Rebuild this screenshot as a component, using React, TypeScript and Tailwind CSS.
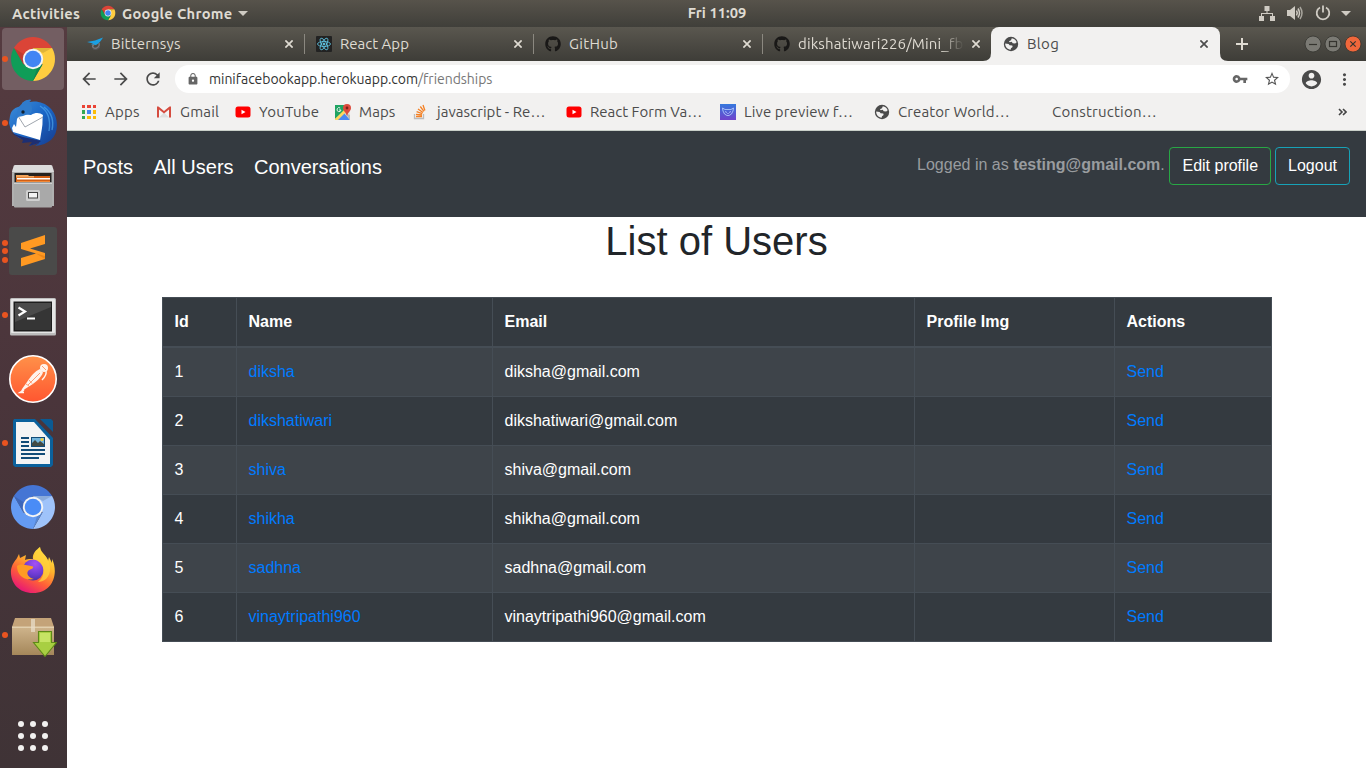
import React from "react";
import { FaGithub } from "react-icons/fa";
import {
  MdArrowBack,
  MdArrowForward,
  MdLock,
  MdMoreVert,
  MdRefresh,
  MdStarBorder,
  MdVpnKey,
} from "react-icons/md";

type IconProps = { className?: string };

function ChromeMark({
  className,
  top = "#db4437",
  right = "#ffcd40",
  left = "#0f9d58",
  core = "#4285f4",
}: IconProps & { top?: string; right?: string; left?: string; core?: string }) {
  return (
    <svg viewBox="0 0 48 48" className={className}>
      <path fill={top} d="M4.95 13A22 22 0 0 1 43.05 13H24L14.47 29.5Z" />
      <path fill={right} d="M43.05 13A22 22 0 0 1 24 46L33.53 29.5L24 13Z" />
      <path fill={left} d="M24 46A22 22 0 0 1 4.95 13L14.47 29.5H33.53Z" />
      <path fill="#000" opacity=".12" d="M24 13H43L34 18ZM5 13L14.5 29.5L16 20ZM24 46L33.5 29.5L28 33Z" />
      <circle cx="24" cy="24" r="10.2" fill="#f4f4f4" />
      <circle cx="24" cy="24" r="8.3" fill={core} />
    </svg>
  );
}

function Globe({ className }: IconProps) {
  return (
    <svg viewBox="0 0 16 16" className={className}>
      <circle cx="8" cy="8" r="7.200" fill="#4a4a4a" />
      <path
        fill="#f2f1f0"
        d="M8.800 2.200C11 2.400 13 4 13.700 6.200L12.200 7.400L9.700 7.200L8.700 5.800L6.800 6.200L5.900 5.200L8 4.300ZM2.200 7.600L5.600 8L6.600 9.200L9.300 9.600L9.600 11L8 12.200L7.600 13.700C4.400 13.500 2 10.800 2.200 7.600Z"
      />
    </svg>
  );
}

function Thunderbird() {
  return (
    <svg viewBox="0 0 48 48" className="size-12">
      <defs>
        <linearGradient id="tb" x1="0" y1="0" x2="1" y2="1">
          <stop offset="0" stopColor="#3f8fd8" />
          <stop offset=".5" stopColor="#1a66c6" />
          <stop offset="1" stopColor="#163a8c" />
        </linearGradient>
      </defs>
      <path fill="url(#tb)" d="M13 4C16 1 20 0 22 1L20 3C34 0 48 10 48 26C48 38 40 46 26 47L30 44L20 47L24 43C12 42 2 36 0 24L1 17C2 11 6 8 13 7Z" />
      <path fill="#1d2f73" d="M2 34L14 38L32 42L26 47L30 44L20 47L23 43L13 44L14 41Z" />
      <path fill="#fff" d="M11 15L22 16C27 13 31 14 34 16C33 20 34 24 33 29L31 41L4 33L3 29L5 25L7 28L8 20Z" />
      <path fill="none" stroke="#888f99" strokeWidth=".8" d="M9 17L16 28L34 18" />
      <path fill="#2f7bcc" d="M9 10C12 4 18 0 22 1L19 4C23 5 24 9 22 14L14 17L9 18C8 15 8 12 9 10Z" />
      <circle cx="14" cy="13" r="1.700" fill="#123" />
      <path fill="none" stroke="#4ba3e8" strokeWidth="1.400" opacity=".7" d="M31 7C39 12 42 20 40 32M35 8C43 14 45 22 43 31" />
    </svg>
  );
}

function Files() {
  return (
    <svg viewBox="0 -1 48 48" className="size-12">
      <path fill="#b0b0b0" d="M4 4H44L45 9V42H3V9Z" />
      <path fill="#dcdcdc" d="M4.500 2.500Q4.500 1 6 1H42Q43.500 1 43.500 2.500L45 8H3Z" />
      <rect x="5.500" y="9" width="37" height="10" fill="#262220" />
      <path fill="#d35f14" d="M7 12H41V18H7Z" />
      <path fill="#f3a55c" d="M7 11H19L20 12H25V13.500H7Z" />
      <path fill="#fff" d="M8 14H41V15.500H8Z" />
      <path fill="#f08a3a" d="M8 17H41V18H8Z" />
      <rect x="5" y="18.500" width="38" height="25" rx="1" fill="#a9a9a9" />
      <path fill="#cfcfcf" d="M5 18.500H43V20H5Z" />
      <rect x="17" y="26" width="14" height="11" rx="1.500" fill="#d0d0d0" />
      <rect x="19.500" y="28.500" width="9" height="5.500" fill="#f4f4f4" stroke="#444" strokeWidth="1" />
    </svg>
  );
}

function Sublime() {
  return (
    <svg viewBox="0 0 48 48" className="size-12">
      <rect width="48" height="48" rx="3" fill="#4a4a49" />
      <path fill="#ff9922" d="M12 16L36 8V17L21 21.500L36 26V32L12 39.500V31L27 26.500L12 22Z" />
      <path fill="#e27d12" d="M12 22L36 29V32L27 26.500Z" opacity=".65" />
    </svg>
  );
}

function Terminal() {
  return (
    <svg viewBox="0 0 48 48" className="size-12">
      <rect x="1" y="7" width="46" height="37.500" rx="1.500" fill="#bdbdbd" />
      <rect x="2" y="8" width="44" height="34" rx="1" fill="#e6e6e6" />
      <rect x="4.500" y="10.500" width="38.500" height="30" fill="#1d1d1d" />
      <rect x="6" y="12" width="36" height="27" fill="#353535" />
      <path fill="#5a5a5a" opacity=".6" d="M6 12H42V16L6 31Z" />
      <path fill="none" stroke="#fff" strokeWidth="2.200" d="M9.500 16.500L16 20.500L9.500 24.500" />
      <path fill="#fff" d="M18 26.500H26V28.500H18Z" />
    </svg>
  );
}

function Postman() {
  return (
    <svg viewBox="0 0 48 48" className="size-12">
      <defs>
        <linearGradient id="pm" x1="0" y1="0" x2="0" y2="1">
          <stop offset="0" stopColor="#ff9149" />
          <stop offset="1" stopColor="#ff5630" />
        </linearGradient>
      </defs>
      <circle cx="24" cy="24" r="23.200" fill="url(#pm)" stroke="#fff" strokeWidth="1.600" />
      <circle cx="35" cy="13" r="4" fill="#fff3ec" />
      <path fill="#fff3ec" d="M31 14L34 17.500C32 23 27 27 21.500 30.500L16 34L11.500 38L13 34L18 27C22 21 26 16 31 14Z" />
      <path fill="none" stroke="#fff3ec" strokeWidth="1.500" d="M37 16C38 20 35 23 33 25M15 35L11 37.500H15" />
      <path fill="none" stroke="#ff783d" strokeWidth=".7" d="M20 25L23 28.500M33 11L37 15M17 29L20 31M19 30L31 18" />
    </svg>
  );
}

function Writer() {
  return (
    <svg viewBox="0 0 48 48" className="size-12">
      <path fill="#0b619c" d="M5 0H26L44 19V46L42 48H6L4 46V2Z" />
      <path fill="#f4f4f4" d="M7 3H25L41 21V45H7Z" />
      <path fill="#0b5a92" d="M31 0H42L44 2V13Z" />
      <path fill="#124c77" d="M12 18H20V20H12ZM12 22H20V24H12ZM12 26H20V28H12ZM12 30H36V32H12ZM12 34H36V36H12ZM12 38H30V40H12Z" />
      <rect x="22.500" y="18.500" width="13" height="9" fill="#74b5db" stroke="#124c77" />
      <path fill="#434b45" d="M23 27V24L26 21L29 24L31 22L35 25V27Z" />
      <circle cx="33" cy="20.500" r="1.500" fill="#f5cf3a" />
    </svg>
  );
}

function Firefox() {
  return (
    <svg viewBox="0 0 48 48" className="size-12">
      <defs>
        <linearGradient id="ff" x1=".8" y1="0" x2=".25" y2="1">
          <stop offset="0" stopColor="#fff04a" />
          <stop offset=".35" stopColor="#ffb42c" />
          <stop offset=".65" stopColor="#ff6037" />
          <stop offset="1" stopColor="#e5107c" />
        </linearGradient>
        <radialGradient id="fp" cx=".6" cy=".2" r=".9">
          <stop offset="0" stopColor="#a451f5" />
          <stop offset=".6" stopColor="#6a3ad0" />
          <stop offset="1" stopColor="#43308f" />
        </radialGradient>
      </defs>
      <path fill="url(#ff)" d="M10 7L11 11C13 10 15 9 17 8L16 13C19 11.500 22 12 24 12C23 7 27 3 31 0C31 6 38 8 39 14L40 10L43 16V12C50 26 44 46 24 46C9 46 1 35 2 23C3 17 6 14 8 11Z" />
      <circle cx="24" cy="23" r="10.500" fill="url(#fp)" />
      <path fill="#ff9b24" d="M8 19C12 16 17 18 24 19.500C25 22 21 22 19 24C17 27 20 31 25 32C15 34 8 28 8 19Z" />
      <path fill="#ffd33c" d="M24 12C27 4 30 2 31 0C32 7 40 9 41 20C42 31 34 35 29 35C38 28 36 15 24 12Z" opacity=".75" />
    </svg>
  );
}

function Package() {
  return (
    <svg viewBox="0 0 48 48" className="size-12">
      <defs>
        <linearGradient id="bx" x1="0" y1="0" x2="0" y2="1">
          <stop offset="0" stopColor="#cfb48c" />
          <stop offset="1" stopColor="#a5875a" />
        </linearGradient>
      </defs>
      <path fill="#c4a379" d="M6 7H42L45 16H3Z" />
      <rect x="3" y="16" width="42" height="28" fill="url(#bx)" />
      <path fill="#e1cfae" d="M3 15.500H45V17H3Z" />
      <path fill="#e8dcc8" opacity=".75" d="M22 8H26V21H22Z" />
      <path fill="#a8cf42" stroke="#5d8a17" strokeWidth="1.100" d="M29.500 20.500H42.500V31.500H47.500L36 45.500L24.500 31.500H29.500Z" />
      <path fill="#d6ef77" opacity=".65" d="M31 22H41V31H31Z" />
    </svg>
  );
}

type DockItem = { name: string; icon: React.ReactNode; dots: number; active?: boolean };

const dock: DockItem[] = [
  { name: "chrome", icon: <ChromeMark className="size-12" />, dots: 1, active: true },
  { name: "thunderbird", icon: <Thunderbird />, dots: 1 },
  { name: "files", icon: <Files />, dots: 0 },
  { name: "sublime", icon: <Sublime />, dots: 3 },
  { name: "terminal", icon: <Terminal />, dots: 1 },
  { name: "postman", icon: <Postman />, dots: 0 },
  { name: "writer", icon: <Writer />, dots: 1 },
  {
    name: "chromium",
    icon: <ChromeMark className="size-12" top="#4575d4" right="#9fc3fa" left="#649bf3" core="#4a8cf6" />,
    dots: 0,
  },
  { name: "firefox", icon: <Firefox />, dots: 0 },
  { name: "package", icon: <Package />, dots: 1 },
];

function Dock() {
  return (
    <aside className="flex w-[67px] shrink-0 flex-col bg-linear-to-b from-[#553b40] via-[#4a353b] to-[#3f3336]">
      {dock.map((d) => (
        <div key={d.name} className="flex h-16 items-center">
          <div
            className={
              d.active
                ? "ml-0.5 flex h-[62px] w-[62px] items-center rounded bg-[#735e62]"
                : "ml-0.5 flex h-[62px] w-[62px] items-center"
            }
          >
            <span className="flex w-[7px] flex-col items-start gap-[2.5px]">
              {Array.from({ length: d.dots }, (_, i) => (
                <i key={i} className="size-1.5 rounded-full bg-[#e95420]" />
              ))}
            </span>
            {d.icon}
          </div>
        </div>
      ))}
      <div className="mt-auto flex h-[64px] items-center justify-center pr-px">
        <div className="grid grid-cols-3 gap-1.5">
          {Array.from({ length: 9 }, (_, i) => (
            <i key={i} className="size-1.5 rounded-full bg-[#f2f1f0]" />
          ))}
        </div>
      </div>
    </aside>
  );
}

function TopBar() {
  return (
    <header className="grid h-[27px] shrink-0 grid-cols-[1fr_auto_1fr] items-center bg-linear-to-b from-[#57534b] to-[#403f3a] text-[14.67px] leading-none font-bold text-[#dfdbd2]">
      <div className="flex items-center pl-3">
        <span className="w-[88px] pt-0.5 tracking-[0.3px]">Activities</span>
        <ChromeMark className="mb-px size-4" />
        <span className="ml-1.5 pt-0.5 tracking-[0.3px]">Google Chrome</span>
        <svg viewBox="0 0 10 5" className="ml-1.5 h-[5px] w-[10px]" fill="#cfcbc3">
          <path d="M0 0H10L5 5Z" />
        </svg>
      </div>
      <span className="pl-[68px] tracking-[0.05px]">Fri 11:09</span>
      <div className="flex items-center justify-end pr-[15px]">
        <svg viewBox="0 0 16 16" className="mr-3 mb-px size-4" fill="#cfcbc3">
          <path d="M5.500 1H10.500V6H8.500V8H14V11H16V16H11V11H13V9H3V11H5V16H0V11H2V8H7.500V6H5.500Z" />
        </svg>
        <svg viewBox="0 0 16 16" className="mr-3 mb-px size-4" fill="none" stroke="#cfcbc3" strokeWidth="1.500">
          <path fill="#cfcbc3" stroke="none" d="M0 5H3L8 1V15L3 11H0Z" />
          <path d="M9.500 5.500Q11 8 9.500 10.500M11 3.500Q14 8 11 12.500" />
          <path stroke="#a8a59d" d="M13 2Q17 8 13 14" />
        </svg>
        <svg viewBox="0 0 16 16" className="mr-2.5 mb-px size-4" fill="none" stroke="#cfcbc3" strokeWidth="1.800">
          <path d="M5 2.500A6.300 6.300 0 1 0 11 2.500M8 .5V7.500" />
        </svg>
        <svg viewBox="0 0 10 5" className="h-[5px] w-[10px]" fill="#cfcbc3">
          <path d="M0 0H10L5 5Z" />
        </svg>
      </div>
    </header>
  );
}

function CloseX({ className }: IconProps) {
  return (
    <svg viewBox="0 0 8 8" className={className} fill="none" stroke="currentColor" strokeWidth="1.700">
      <path d="M.4 .4L7.600 7.600M7.600 .4L.4 7.600" />
    </svg>
  );
}

const tabs = [
  {
    title: "Bitternsys",
    track: "tracking-[0.2px]",
    icon: (
      <svg viewBox="0 0 16 16" className="size-4">
        <path fill="#1ba0e2" d="M0 6L8 4.500L16 1.500C14 5 12.500 7 9 9L4 8.500L6 7.500Z" />
        <path fill="none" stroke="#77777a" strokeWidth="1.500" d="M12 7C13 10 11 12 8 12.500C5 12 5 9.500 7 8.500" />
        <path fill="none" stroke="#56565a" d="M6 13Q10 15 13 11" />
      </svg>
    ),
  },
  {
    title: "React App",
    track: "tracking-[0px]",
    icon: (
      <svg viewBox="0 0 16 16" className="size-4" fill="none" stroke="#61c9e8" strokeWidth=".8">
        <rect width="16" height="16" rx="1" fill="#222" stroke="none" />
        <ellipse cx="8" cy="8" rx="6.500" ry="2.500" />
        <ellipse cx="8" cy="8" rx="6.500" ry="2.500" transform="rotate(60 8 8)" />
        <ellipse cx="8" cy="8" rx="6.500" ry="2.500" transform="rotate(120 8 8)" />
        <circle cx="8" cy="8" r="1" fill="#61c9e8" />
      </svg>
    ),
  },
  { title: "GitHub", track: "tracking-[0.3px]", icon: <FaGithub className="size-4 text-[#191817]" /> },
  {
    title: "dikshatiwari226/Mini_fb",
    track: "tracking-[0.12px]",
    icon: <FaGithub className="size-4 text-[#191817]" />,
    fade: true,
  },
];

function TabStrip() {
  return (
    <div className="flex h-[34px] bg-linear-to-b from-[#5a574f] to-[#3e3d38] pl-2 text-[15px] leading-none text-[#dfdbd2]">
      {tabs.map((t, i) => (
        <div key={t.title} className="flex w-[229px] items-center">
          <div className="flex h-full w-[212px] items-center pl-3">
            {t.icon}
            <span
              className={
                t.fade
                  ? "mb-0.5 ml-2 w-[166px] overflow-hidden py-1 whitespace-nowrap mask-r-from-85% mask-r-to-100%"
                  : "mb-0.5 ml-2 w-[166px] overflow-hidden py-1 whitespace-nowrap"
              }
            >
              <span className={t.track}>{t.title}</span>
            </span>
          </div>
          <CloseX className="-ml-0.5 size-2 shrink-0" />
          {i < 3 && <span className="-mr-px ml-auto h-5 w-px bg-[#8b8880]" />}
        </div>
      ))}
      <div className="relative flex w-[229px] items-center rounded-t-lg bg-[#f2f1f0] pl-3 text-[#4c4c4c]">
        <svg viewBox="0 0 8 8" className="absolute bottom-0 -left-2 size-2" fill="#f2f1f0">
          <path d="M8 0V8H0Q8 8 8 0Z" />
        </svg>
        <svg viewBox="0 0 8 8" className="absolute -right-2 bottom-0 size-2" fill="#f2f1f0">
          <path d="M0 0V8H8Q0 8 0 0Z" />
        </svg>
        <Globe className="size-4" />
        <span className="mb-0.5 ml-2 tracking-[0.3px]">Blog</span>
        <CloseX className="mr-3 ml-auto size-2" />
      </div>
      <svg viewBox="0 0 12 12" className="mt-[11px] ml-4 size-3" stroke="#dfdbd2" strokeWidth="2">
        <path d="M6 0V12M0 6H12" />
      </svg>
      <div className="mt-2 mr-1 ml-auto flex gap-[2px]">
        {["min", "max", "close"].map((k) => (
          <svg key={k} viewBox="-1 -1 18 18" className="size-[18px]" fill="none" stroke="#35342f" strokeWidth="1.200">
            <circle cx="8" cy="8" r="8" fill={k === "close" ? "#f0673b" : "#7b7a74"} stroke="#34332e" strokeWidth=".8" />
            {k === "min" && <path d="M4 8.500H12" />}
            {k === "max" && <rect x="4.500" y="5.500" width="7" height="5" />}
            {k === "close" && <path d="M5.300 5.300L10.700 10.700M10.700 5.300L5.300 10.700" />}
          </svg>
        ))}
      </div>
    </div>
  );
}

function Toolbar() {
  return (
    <div className="flex h-9 items-center bg-[#f2f1f0] pl-3 text-[#4a4a4a]">
      <MdArrowBack className="size-5" />
      <MdArrowForward className="ml-3 size-5" />
      <MdRefresh className="ml-3 size-5" />
      <div className="ml-3 flex h-7 w-[1115px] items-center rounded-full bg-white pr-2.5 pl-3">
        <MdLock className="size-3 scale-110 text-[#666]" />
        <span className="ml-2.5 text-[14px] leading-none tracking-[-0.04px] whitespace-nowrap text-[#333]">
          minifacebookapp.herokuapp.com<span className="text-[#777]">/friendships</span>
        </span>
        <MdVpnKey className="ml-auto size-4 text-[#666]" />
        <MdStarBorder className="ml-4 size-4 scale-105 text-[#555]" />
      </div>
      <svg viewBox="0 0 24 24" className="ml-2.5 size-[23px]" fill="currentColor">
        <path d="M12 2C6.480 2 2 6.480 2 12s4.480 10 10 10 10-4.480 10-10S17.520 2 12 2zm0 3c1.660 0 3 1.340 3 3s-1.340 3-3 3-3-1.340-3-3 1.340-3 3-3zm0 14.200c-2.500 0-4.710-1.280-6-3.220.03-1.990 4-3.080 6-3.080 1.990 0 5.970 1.090 6 3.080-1.290 1.940-3.500 3.220-6 3.220z" />
      </svg>
      <MdMoreVert className="ml-3 size-[19px]" />
    </div>
  );
}

function YouTube() {
  return (
    <svg viewBox="0 0 16 16" className="size-4 shrink-0">
      <rect x=".5" y="2.500" width="15" height="11" rx="2.500" fill="#f00" />
      <path fill="#fff" d="M6.500 5.700V10.300L10.500 8Z" />
    </svg>
  );
}

const bookmarks = [
  {
    label: "Apps",
    cls: "w-[75px]",
    track: "tracking-[0.2px]",
    icon: (
      <svg viewBox="0 0 16 16" className="size-4 shrink-0">
        <path fill="#ea4335" d="M1 1H4V4H1ZM6 1H10V4H6ZM12 1H15V4H12Z" />
        <path fill="#34a853" d="M1 6H4V10H1ZM1 12H4V15H1Z" />
        <path fill="#4285f4" d="M6 6H10V10H6Z" />
        <path fill="#fbbc05" d="M12 6H15V10H12ZM6 12H10V15H6ZM12 12H15V15H12Z" />
      </svg>
    ),
  },
  {
    label: "Gmail",
    cls: "w-[79px]",
    track: "tracking-[0.2px]",
    icon: (
      <svg viewBox="0 0 16 16" className="size-4 shrink-0">
        <rect x="2" y="2.500" width="12" height="11" fill="#f5f5f5" />
        <path fill="#dfdfdf" d="M3 13.500L8 8.500L13 13.500Z" />
        <path fill="#d54c3f" d="M1 2.500H2.500L8 7L13.500 2.500H15V13.500H13V5.500L8 9.500L3 5.500V13.500H1Z" />
      </svg>
    ),
  },
  { label: "YouTube", cls: "w-[100px]", track: "tracking-[0.2px]", icon: <YouTube /> },
  {
    label: "Maps",
    cls: "w-[78px]",
    track: "tracking-[0.1px]",
    icon: (
      <svg viewBox="0 0 16 16" className="size-4 shrink-0">
        <rect y="1" width="15" height="15" rx="1" fill="#e4e1dc" />
        <path fill="#1fa463" d="M0 1H11L9 7L0 15Z" />
        <path fill="#4a89f3" d="M2 16L9 9L15 16Z" />
        <path fill="#ffd75e" d="M0 15L9 6L11 8L3 16H0Z" />
        <path fill="#bcb9b3" d="M10 9L15 11V16Z" />
        <path fill="#dd4b3e" d="M12 0A4 4 0 0 1 16 4C16 7 13 8 12 12C11 8 8 7 8 4A4 4 0 0 1 12 0Z" />
        <circle cx="12" cy="4" r="1.400" fill="#7f2018" />
        <path fill="none" stroke="#eee" strokeWidth="1" d="M5.200 4A2 2 0 1 0 6 6H4" />
      </svg>
    ),
  },
  {
    label: "javascript - Re…",
    cls: "w-[153px]",
    track: "tracking-[0.05px]",
    icon: (
      <svg viewBox="0 0 16 16" className="size-4 shrink-0" fill="none" strokeWidth="1.300">
        <path stroke="#bcbbbb" d="M1.500 10V14.500H10.500V10" />
        <path stroke="#f48024" d="M3 12.500H9M3 10.300L9 11M3.600 7.700L9.300 9.700M5 5L10 8.500M7.300 2.500L10.900 7.300M10 1L11.900 6.500" />
      </svg>
    ),
  },
  { label: "React Form Va…", cls: "w-[154px]", track: "tracking-[0px]", icon: <YouTube /> },
  {
    label: "Live preview f…",
    cls: "w-[154px]",
    track: "tracking-[0.12px]",
    icon: (
      <svg viewBox="0 0 16 16" className="size-4 shrink-0" fill="none" stroke="#b9d3ff" strokeWidth=".8">
        <defs>
          <linearGradient id="lp" x1="0" y1="0" x2="0" y2="1">
            <stop offset="0" stopColor="#3578dd" />
            <stop offset="1" stopColor="#7043cc" />
          </linearGradient>
        </defs>
        <rect width="16" height="16" fill="url(#lp)" stroke="none" />
        <path d="M2.500 4L5 5.500H11L13.500 4M3 7L4.500 10L7 11.500H9L11.500 10L13 7M2.500 4L3 7M13.500 4L13 7M5 7.500L7 8.500M11 7.500L9 8.500M7.300 9.500H8.700" />
      </svg>
    ),
  },
  {
    label: "Creator World…",
    cls: "w-[154px]",
    track: "tracking-[0.1px]",
    icon: <Globe className="size-4 shrink-0" />,
  },
  { label: "Construction…", cls: "w-[154px]", track: "tracking-[0.22px]", icon: <span className="size-4 shrink-0" /> },
];

function Bookmarks() {
  return (
    <div className="flex h-[34px] items-center border-b border-[#c9cfc9] bg-[#f2f1f0] pr-[19px] pb-[3px] pl-[14px] text-[15px] leading-none text-[#4c4c4c]">
      {bookmarks.map((b) => (
        <div key={b.label} className={"flex shrink-0 items-center gap-2 whitespace-nowrap " + b.cls}>
          {b.icon}
          <span className={"mb-0.5 " + b.track}>{b.label}</span>
        </div>
      ))}
      <svg viewBox="0 0 9 8" className="ml-auto h-2 w-[9px] shrink-0" fill="none" stroke="#444" strokeWidth="1.600">
        <path d="M1 1L4 4L1 7M5 1L8 4L5 7" />
      </svg>
    </div>
  );
}

const users = [
  ["diksha", "diksha@gmail.com"],
  ["dikshatiwari", "dikshatiwari@gmail.com"],
  ["shiva", "shiva@gmail.com"],
  ["shikha", "shikha@gmail.com"],
  ["sadhna", "sadhna@gmail.com"],
  ["vinaytripathi960", "vinaytripathi960@gmail.com"],
];

function Page() {
  return (
    <main className="flex-1 bg-white font-['Liberation_Sans',Arial,sans-serif] text-base text-[#212529]">
      <nav className="flex h-[86px] items-start justify-between bg-[#343a40] px-4 pt-4 text-white">
        <div className="flex gap-[20.5px] pt-[5px] text-xl leading-[30px]">
          <a>Posts</a>
          <a>All Users</a>
          <a>Conversations</a>
        </div>
        <div className="flex items-start gap-1">
          <p className="pt-1.5 pr-[0.7px] leading-6 text-[#999c9f]">
            Logged in as <b>testing@gmail.com</b>.
          </p>
          <button className="h-[38px] rounded border border-[#28a745] px-3">Edit profile</button>
          <button className="h-[38px] rounded border border-[#17a2b8] px-3">Logout</button>
        </div>
      </nav>
      <h1 className="text-center text-[40px] leading-[48px]">List of Users</h1>
      <table className="mx-auto mt-8 w-[1110px] table-fixed border-collapse bg-[#343a40] text-left text-white">
        <colgroup>
          <col className="w-[74px]" />
          <col className="w-[256px]" />
          <col className="w-[422px]" />
          <col className="w-[200px]" />
          <col />
        </colgroup>
        <thead>
          <tr>
            {["Id", "Name", "Email", "Profile Img", "Actions"].map((h) => (
              <th key={h} className="border border-b-2 border-[#454d55] p-3 font-bold">
                {h}
              </th>
            ))}
          </tr>
        </thead>
        <tbody>
          {users.map(([name, email], i) => (
            <tr key={name} className="odd:bg-white/5">
              <td className="border border-[#454d55] p-3">{i + 1}</td>
              <td className="border border-[#454d55] p-3 text-[#007bff]">{name}</td>
              <td className="border border-[#454d55] p-3">{email}</td>
              <td className="border border-[#454d55] p-3" />
              <td className="border border-[#454d55] p-3 text-[#007bff]">Send</td>
            </tr>
          ))}
        </tbody>
      </table>
    </main>
  );
}

export default function App() {
  return (
    <div className="flex h-screen flex-col overflow-hidden font-['Ubuntu','Noto_Sans',sans-serif]">
      <TopBar />
      <div className="flex min-h-0 flex-1">
        <Dock />
        <div className="flex min-w-0 flex-1 flex-col">
          <TabStrip />
          <Toolbar />
          <Bookmarks />
          <Page />
        </div>
      </div>
    </div>
  );
}
